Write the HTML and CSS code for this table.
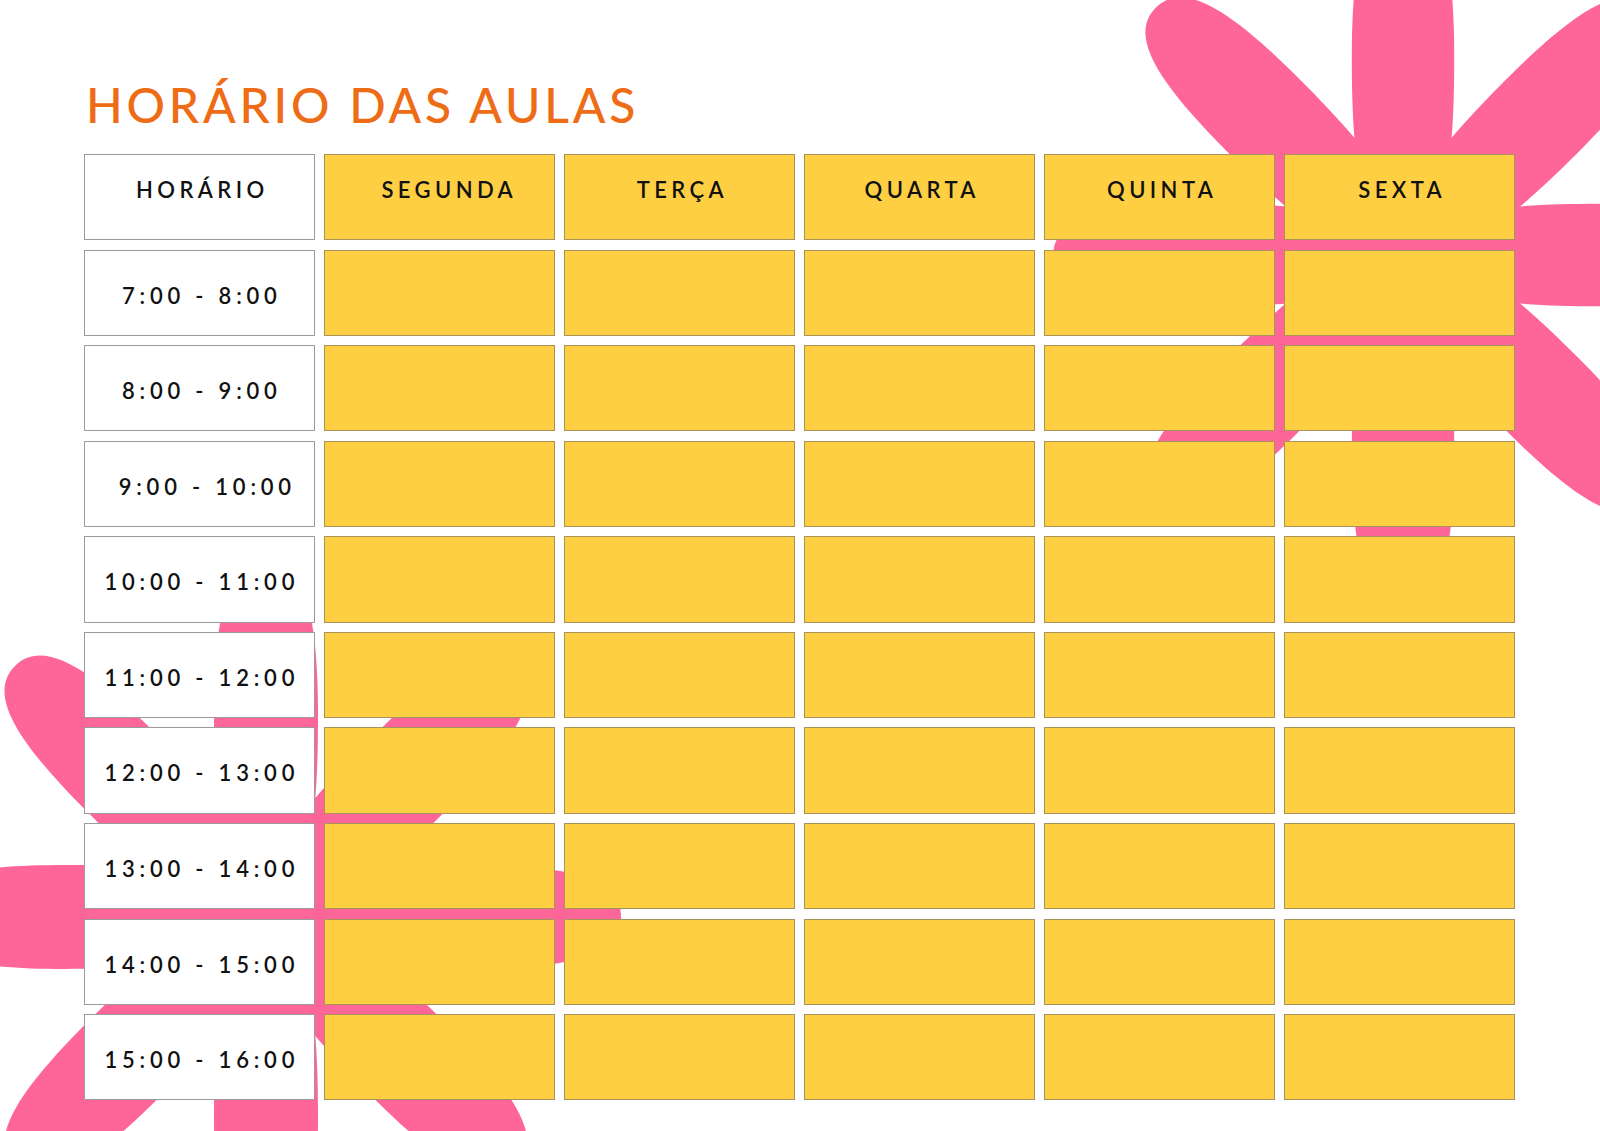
FILE: index.html
```html
<!DOCTYPE html>
<html lang="pt">
<head>
<meta charset="utf-8">
<title>Horário das Aulas</title>
<link rel="stylesheet" href="styles.css">
</head>
<body>
<div class="page">
  <svg class="flowers" width="1600" height="1131" viewBox="0 0 1600 1131" aria-hidden="true">
    <defs>
      <path id="petal" d="M0,0 C20,-40 80,-52 200,-52 C300,-52 355,-40 355,0 C355,40 300,52 200,52 C80,52 20,40 0,0 Z"/>
      <g id="flower">
        <use href="#petal" transform="rotate(0)"/>
        <use href="#petal" transform="rotate(45)"/>
        <use href="#petal" transform="rotate(90)"/>
        <use href="#petal" transform="rotate(135)"/>
        <use href="#petal" transform="rotate(180)"/>
        <use href="#petal" transform="rotate(225)"/>
        <use href="#petal" transform="rotate(270)"/>
        <use href="#petal" transform="rotate(315)"/>
      </g>
    </defs>
    <g class="flower">
      <use href="#flower" transform="translate(1403 255) scale(0.985)"/>
      <use href="#flower" transform="translate(266 917)"/>
    </g>
  </svg>

  <main class="sheet">
    <h1 class="title">HORÁRIO DAS AULAS</h1>
    <div class="grid">
      <div class="cell head time">HORÁRIO</div>
      <div class="cell head day nudge">SEGUNDA</div>
      <div class="cell head day">TERÇA</div>
      <div class="cell head day">QUARTA</div>
      <div class="cell head day">QUINTA</div>
      <div class="cell head day">SEXTA</div>

      <div class="cell hour time">7:00 - 8:00</div>
      <div class="cell day"></div><div class="cell day"></div><div class="cell day"></div><div class="cell day"></div><div class="cell day"></div>

      <div class="cell hour time">8:00 - 9:00</div>
      <div class="cell day"></div><div class="cell day"></div><div class="cell day"></div><div class="cell day"></div><div class="cell day"></div>

      <div class="cell hour time shifted">9:00 - 10:00</div>
      <div class="cell day"></div><div class="cell day"></div><div class="cell day"></div><div class="cell day"></div><div class="cell day"></div>

      <div class="cell hour time">10:00 - 11:00</div>
      <div class="cell day"></div><div class="cell day"></div><div class="cell day"></div><div class="cell day"></div><div class="cell day"></div>

      <div class="cell hour time">11:00 - 12:00</div>
      <div class="cell day"></div><div class="cell day"></div><div class="cell day"></div><div class="cell day"></div><div class="cell day"></div>

      <div class="cell hour time">12:00 - 13:00</div>
      <div class="cell day"></div><div class="cell day"></div><div class="cell day"></div><div class="cell day"></div><div class="cell day"></div>

      <div class="cell hour time">13:00 - 14:00</div>
      <div class="cell day"></div><div class="cell day"></div><div class="cell day"></div><div class="cell day"></div><div class="cell day"></div>

      <div class="cell hour time">14:00 - 15:00</div>
      <div class="cell day"></div><div class="cell day"></div><div class="cell day"></div><div class="cell day"></div><div class="cell day"></div>

      <div class="cell hour time">15:00 - 16:00</div>
      <div class="cell day"></div><div class="cell day"></div><div class="cell day"></div><div class="cell day"></div><div class="cell day"></div>
    </div>
  </main>
</div>
</body>
</html>
```

FILE: styles.css
```css
* {
  box-sizing: border-box;
}

html, body {
  margin: 0;
  padding: 0;
  background: #ffffff;
}

.page {
  position: relative;
  width: 1600px;
  height: 1131px;
  overflow: hidden;
  background: #ffffff;
  font-family: Lato, "Open Sans", "DejaVu Sans", sans-serif;
}

.flowers {
  position: absolute;
  left: 0;
  top: 0;
  display: block;
}

.flower {
  fill: #fe6699;
}

.sheet {
  position: relative;
  padding: 81px 0 0 84px;
}

.title {
  margin: 0;
  padding-left: 2px;
  font-size: 48px;
  line-height: 1;
  font-weight: 500;
  letter-spacing: 3.8px;
  color: #ef6c17;
}

.grid {
  margin-top: 25px;
  display: grid;
  grid-template-columns: repeat(6, 230.6px);
  grid-auto-rows: 86.2px;
  column-gap: 9.4px;
  row-gap: 9.4px;
}

.cell {
  display: flex;
  justify-content: center;
  align-items: flex-start;
  border: 1px solid #a8925c;
  font-size: 22px;
  line-height: 22px;
  font-weight: 600;
  color: #111111;
  letter-spacing: 4.4px;
  padding-left: 6px;
}

.day {
  background: #fecf42;
}

.time {
  background: #ffffff;
  border-color: #9c9a9a;
}

.head {
  padding-top: 24px;
}

.nudge {
  padding-left: 20px;
}

.hour {
  padding-top: 34px;
  letter-spacing: 4.8px;
  padding-left: 5px;
}

.shifted {
  padding-left: 16px;
}
```
